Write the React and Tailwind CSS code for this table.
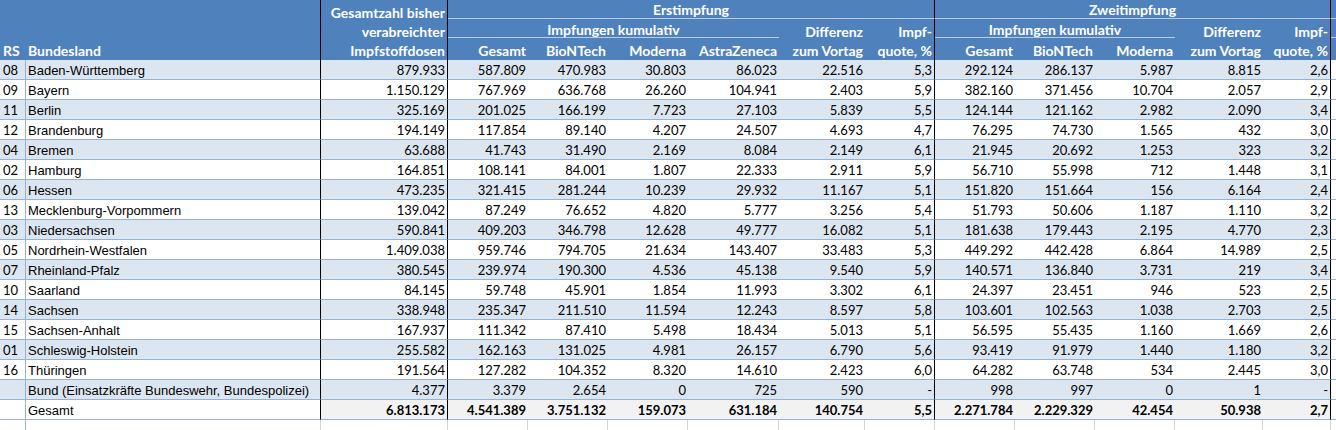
import React from "react";

const rows = [
  ["08","Baden-Württemberg","879.933","587.809","470.983","30.803","86.023","22.516","5,3","292.124","286.137","5.987","8.815","2,6"],
  ["09","Bayern","1.150.129","767.969","636.768","26.260","104.941","2.403","5,9","382.160","371.456","10.704","2.057","2,9"],
  ["11","Berlin","325.169","201.025","166.199","7.723","27.103","5.839","5,5","124.144","121.162","2.982","2.090","3,4"],
  ["12","Brandenburg","194.149","117.854","89.140","4.207","24.507","4.693","4,7","76.295","74.730","1.565","432","3,0"],
  ["04","Bremen","63.688","41.743","31.490","2.169","8.084","2.149","6,1","21.945","20.692","1.253","323","3,2"],
  ["02","Hamburg","164.851","108.141","84.001","1.807","22.333","2.911","5,9","56.710","55.998","712","1.448","3,1"],
  ["06","Hessen","473.235","321.415","281.244","10.239","29.932","11.167","5,1","151.820","151.664","156","6.164","2,4"],
  ["13","Mecklenburg-Vorpommern","139.042","87.249","76.652","4.820","5.777","3.256","5,4","51.793","50.606","1.187","1.110","3,2"],
  ["03","Niedersachsen","590.841","409.203","346.798","12.628","49.777","16.082","5,1","181.638","179.443","2.195","4.770","2,3"],
  ["05","Nordrhein-Westfalen","1.409.038","959.746","794.705","21.634","143.407","33.483","5,3","449.292","442.428","6.864","14.989","2,5"],
  ["07","Rheinland-Pfalz","380.545","239.974","190.300","4.536","45.138","9.540","5,9","140.571","136.840","3.731","219","3,4"],
  ["10","Saarland","84.145","59.748","45.901","1.854","11.993","3.302","6,1","24.397","23.451","946","523","2,5"],
  ["14","Sachsen","338.948","235.347","211.510","11.594","12.243","8.597","5,8","103.601","102.563","1.038","2.703","2,5"],
  ["15","Sachsen-Anhalt","167.937","111.342","87.410","5.498","18.434","5.013","5,1","56.595","55.435","1.160","1.669","2,6"],
  ["01","Schleswig-Holstein","255.582","162.163","131.025","4.981","26.157","6.790","5,6","93.419","91.979","1.440","1.180","3,2"],
  ["16","Thüringen","191.564","127.282","104.352","8.320","14.610","2.423","6,0","64.282","63.748","534","2.445","3,0"],
  ["","Bund (Einsatzkräfte Bundeswehr, Bundespolizei)","4.377","3.379","2.654","0","725","590","-","998","997","0","1","-"],
];
const total = ["","Gesamt","6.813.173","4.541.389","3.751.132","159.073","631.184","140.754","5,5","2.271.784","2.229.329","42.454","50.938","2,7"];

const GRID = "grid grid-cols-[26px_295px_127px_80px_80px_80px_91px_86px_70px_80px_80px_80px_88px_68px_5px]";
const BLACK = [1, 2, 8, 13];

function DataRow({ cells, bg, isTotal }) {
  return (
    <div className={GRID + " h-5"}>
      {cells.map((v, c) => {
        let cls = "flex items-center border-b border-[#95B3D7] pt-[3px] overflow-hidden whitespace-nowrap ";
        if (isTotal) cls += c < 2 ? "bg-white " : "bg-[#F2F2F2] ";
        else cls += bg + " ";
        if (c === 0) cls += "border-r border-r-[#95B3D7] pl-[3px] text-[13px] ";
        else if (c === 1) cls += "pl-[2px] font-['Liberation_Sans',Arial,sans-serif] text-[13px] ";
        else cls += "justify-end pr-[2px] text-[13px] ";
        if (BLACK.includes(c)) cls += "border-r border-r-black ";
        if (isTotal && c >= 2) cls += "font-bold ";
        return (
          <div key={c} className={cls}>
            {v}
          </div>
        );
      })}
      <div className={"border-b border-[#95B3D7] bg-white"} />
    </div>
  );
}

export default function App() {
  const hd = "flex bg-[#4F81BD] text-white font-bold text-[14px] whitespace-nowrap";
  return (
    <div className="w-[1336px] h-[430px] overflow-hidden bg-white font-['Lato',sans-serif] text-black">
      <div className={GRID + " grid-rows-[19px_19px_22px]"}>
        <div className={hd + " col-start-1 row-start-1 row-span-3 items-end pl-[3px] leading-[19px]"}>RS</div>
        <div className={hd + " col-start-2 row-start-1 row-span-3 items-end pl-[2px] leading-[19px] border-r border-black"}>Bundesland</div>
        <div className={hd + " col-start-3 row-start-1 row-span-3 flex-col items-end justify-end pr-[2px] leading-[19px] border-r border-black"}>
          <span>Gesamtzahl bisher</span>
          <span>verabreichter</span>
          <span>Impfstoffdosen</span>
        </div>
        <div className={hd + " col-start-4 col-span-6 row-start-1 items-center justify-center pt-[1px] border-b border-b-[#B8CCE4] border-r border-r-black"}>Erstimpfung</div>
        <div className={hd + " col-start-4 col-span-4 row-start-2 items-center justify-center border-b border-b-[#B8CCE4] pt-[3px]"}>Impfungen kumulativ</div>
        <div className={hd + " col-start-8 row-start-2 row-span-2 flex-col items-end justify-end pr-[2px] leading-[19px]"}>
          <span>Differenz</span>
          <span>zum Vortag</span>
        </div>
        <div className={hd + " col-start-9 row-start-2 row-span-2 flex-col items-end justify-end pr-[2px] leading-[19px] border-r border-black"}>
          <span>Impf-</span>
          <span>quote, %</span>
        </div>
        {["Gesamt", "BioNTech", "Moderna", "AstraZeneca"].map((t, i) => (
          <div key={t} className={hd + " row-start-3 items-end justify-end pr-[2px] leading-[19px] " + ["col-start-4", "col-start-5", "col-start-6", "col-start-7"][i]}>{t}</div>
        ))}
        <div className={hd + " col-start-10 col-span-5 row-start-1 items-center justify-center pt-[1px] border-b border-b-[#B8CCE4] border-r border-r-black"}>Zweitimpfung</div>
        <div className={hd + " col-start-10 col-span-3 row-start-2 items-center justify-center border-b border-b-[#B8CCE4] pt-[3px]"}>Impfungen kumulativ</div>
        <div className={hd + " col-start-13 row-start-2 row-span-2 flex-col items-end justify-end pr-[2px] leading-[19px]"}>
          <span>Differenz</span>
          <span>zum Vortag</span>
        </div>
        <div className={hd + " col-start-14 row-start-2 row-span-2 flex-col items-end justify-end pr-[2px] leading-[19px] border-r border-black"}>
          <span>Impf-</span>
          <span>quote, %</span>
        </div>
        {["col-start-10", "col-start-11", "col-start-12"].map((cs, i) => (
          <div key={cs} className={hd + " row-start-3 items-end justify-end pr-[2px] leading-[19px] " + cs}>{["Gesamt", "BioNTech", "Moderna"][i]}</div>
        ))}
        <div className="col-start-15 row-start-1 bg-[#4F81BD] border-b border-[#B8CCE4]" />
        <div className="col-start-15 row-start-2 bg-[#4F81BD] border-b border-[#B8CCE4]" />
        <div className="col-start-15 row-start-3 bg-[#4F81BD]" />
      </div>
      {rows.map((r, i) => (
        <DataRow key={i} cells={r} bg={i % 2 === 0 ? "bg-[#DCE6F1]" : "bg-white"} />
      ))}
      <DataRow cells={total} isTotal />
      <div className={GRID + " h-[10px]"}>
        {Array.from({ length: 15 }).map((_, c) => (
          <div key={c} className={c === 0 ? "border-r border-[#95B3D7]" : c === 14 ? "" : "border-r border-[#D4D4D4]"} />
        ))}
      </div>
    </div>
  );
}
